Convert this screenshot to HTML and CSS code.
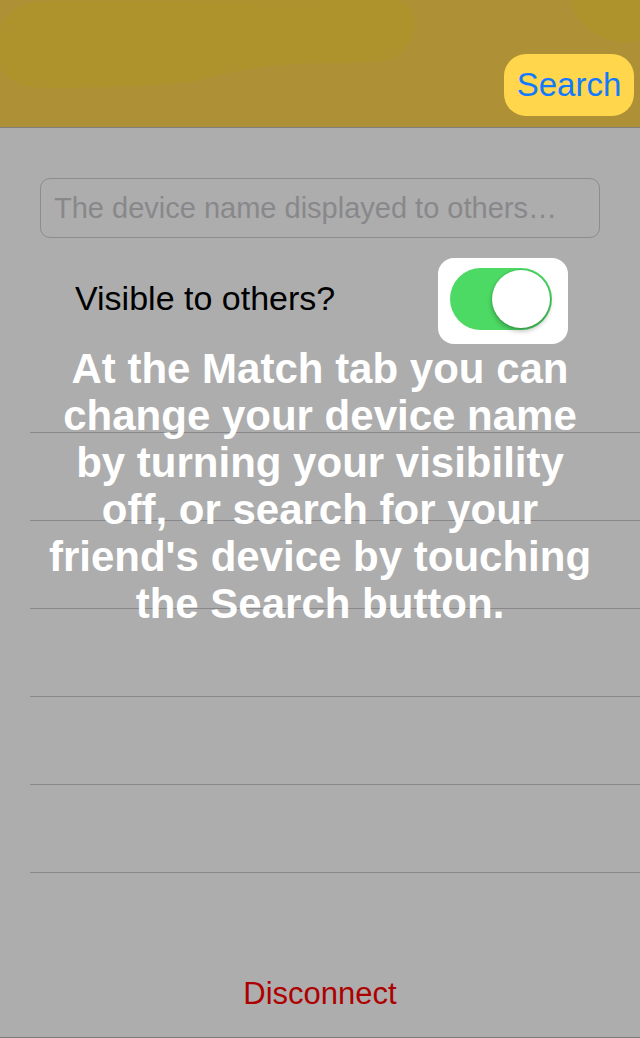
FILE: index.html
```html
<!DOCTYPE html>
<html>
<head>
<meta charset="utf-8">
<link rel="stylesheet" href="styles.css">
</head>
<body>
<div class="screen">
  <header class="navbar">
    <svg class="nav-blobs" width="640" height="128" viewBox="0 0 640 128">
      <path d="M0 30 Q5 3 45 1 L395 0 Q415 2 414 25 Q412 58 375 62 L290 64 Q240 68 200 80 Q180 86 60 88 Q20 90 5 75 Q0 70 0 60 Z" fill="#ae922b"/>
      <circle cx="625" cy="-15" r="57" fill="#ae922b"/>
    </svg>
    <button class="search-btn">Search</button>
  </header>

  <main class="content">
    <div class="name-field">The device name displayed to others…</div>

    <div class="visible-row">
      <span class="visible-label">Visible to others?</span>
      <div class="switch-spot">
        <div class="switch">
          <div class="knob"></div>
        </div>
      </div>
    </div>

    <ul class="rows">
      <li></li><li></li><li></li><li></li><li></li><li></li>
    </ul>

    <div class="disconnect">Disconnect</div>
  </main>

  <div class="tabbar"></div>

  <p class="coach">At the Match tab you can<br>change your device name<br>by turning your visibility<br>off, or search for your<br>friend's device by touching<br>the Search button.</p>
</div>
</body>
</html>
```

FILE: styles.css
```css
* { box-sizing: border-box; }

html, body {
  margin: 0;
  padding: 0;
}

body {
  background: #adadad;
  font-family: "Liberation Sans", Arial, Helvetica, sans-serif;
}

.screen {
  position: relative;
  width: 640px;
  height: 1038px;
  overflow: hidden;
  background: #adadad;
  display: flex;
  flex-direction: column;
}

.navbar {
  position: relative;
  height: 128px;
  flex: 0 0 128px;
  background: #ae9036;
  border-bottom: 1px solid #7f7f7f;
  display: flex;
  justify-content: flex-end;
  align-items: flex-end;
  padding: 0 6px 11px 0;
}

.nav-blobs {
  position: absolute;
  left: 0;
  top: 0;
}

.search-btn {
  position: relative;
  width: 130px;
  height: 62px;
  border: 0;
  border-radius: 22px;
  background: #ffd64c;
  color: #117aff;
  font-family: "Liberation Sans", Arial, sans-serif;
  font-size: 33px;
  padding: 0;
  line-height: 62px;
}

.content {
  flex: 1;
  display: flex;
  flex-direction: column;
  padding-top: 50px;
}

.name-field {
  margin: 0 40px;
  height: 60px;
  border: 1px solid #8c8c8c;
  border-radius: 10px;
  color: #88888b;
  font-size: 29px;
  line-height: 58px;
  padding-left: 13px;
  white-space: nowrap;
}

.visible-row {
  margin-top: 20px;
  height: 86px;
  display: flex;
  align-items: center;
  padding-left: 75px;
  padding-right: 72px;
}

.visible-label {
  font-size: 34px;
  color: #000;
  margin-top: -6px;
}

.switch-spot {
  margin-left: auto;
  width: 130px;
  height: 86px;
  background: #fff;
  border-radius: 16px;
  padding: 10px 16px 14px 12px;
}

.switch {
  width: 102px;
  height: 62px;
  border-radius: 31px;
  background: #4cd964;
  display: flex;
  justify-content: flex-end;
  align-items: center;
  padding: 2px;
}

.knob {
  width: 58px;
  height: 58px;
  border-radius: 50%;
  background: #fff;
  box-shadow: 0 3px 5px rgba(0, 0, 0, 0.28), 0 0 0 1px rgba(0, 0, 0, 0.06);
}

.rows {
  list-style: none;
  margin: 1px 0 0 30px;
  padding: 0;
}

.rows li {
  height: 88px;
  border-bottom: 1px solid #88888a;
}

.disconnect {
  margin-top: 103px;
  text-align: center;
  color: #ad0000;
  font-size: 31px;
  line-height: 36px;
}

.tabbar {
  position: absolute;
  left: 0;
  right: 0;
  top: 1037px;
  height: 1px;
  background: #7b7b7b;
}

.coach {
  position: absolute;
  left: 0;
  right: 0;
  top: 345px;
  margin: 0;
  text-align: center;
  color: #fff;
  font-weight: bold;
  font-size: 42px;
  line-height: 47px;
  white-space: nowrap;
}
```
